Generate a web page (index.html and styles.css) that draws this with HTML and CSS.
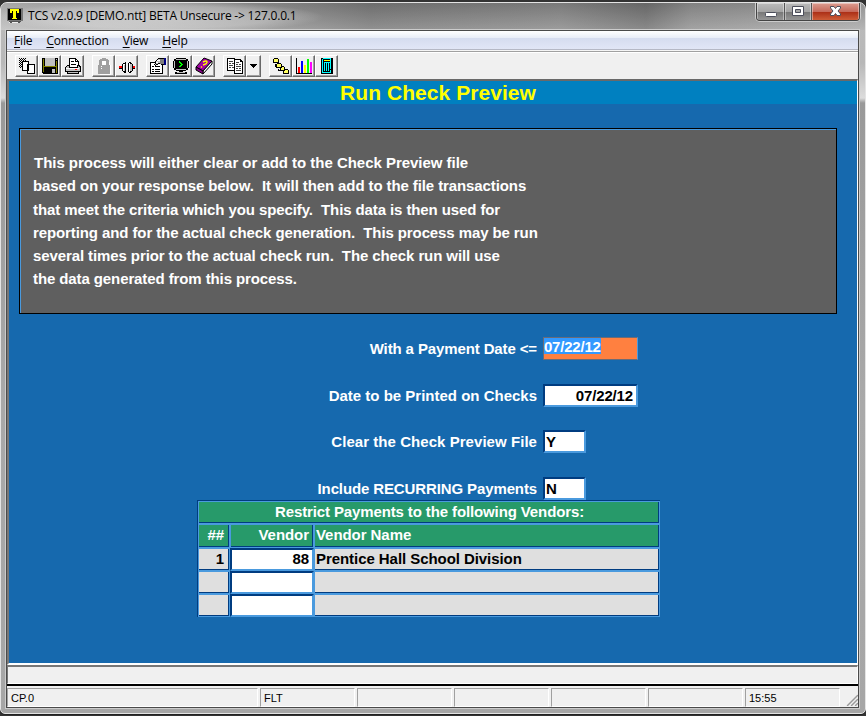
FILE: index.html
```html
<!DOCTYPE html>
<html lang="en">
<head>
<meta charset="utf-8">
<title>TCS v2.0.9</title>
<link rel="stylesheet" href="styles.css">
</head>
<body>
<div class="window">
  <header class="titlebar">
    <svg class="app-icon" width="16" height="16" viewBox="0 0 16 16" shape-rendering="crispEdges"><path fill="#777" d="M0 0h16v13H0z"/><path fill="#000" d="M1 1h13v11H1z"/><path fill="#ff0" d="M3 1h9v4h-2V3H9v7h1v1H5v-1h1V3H5v2H3z"/><path fill="#555" d="M2 13h12v1H2zM3 14h2v1H3zM11 14h2v1h-2z"/><path fill="#eee" d="M2 14h1v1H2zM5 14h6v1H5z"/></svg>
    <span class="caption">TCS v2.0.9 [DEMO.ntt] BETA Unsecure -&gt; 127.0.0.1</span>
    <div class="controls">
      <span class="ctl min"><svg width="26" height="18" viewBox="0 0 26 18"><rect x="8.500" y="9.500" width="11" height="4" rx="1" fill="#fff" stroke="#4c4e5b"/></svg></span>
      <span class="ctl max"><svg width="26" height="18" viewBox="0 0 26 18"><path fill="#fff" stroke="#4c4e5b" fill-rule="evenodd" d="M7.500 3.500h11v9h-11zM10.500 6.500v3h5v-3z"/></svg></span>
      <span class="ctl close"><svg width="46" height="18" viewBox="0 0 46 18"><path fill="#fff" stroke="#4c4e5b" d="M18.500 3.500h3.500l1.500 2 1.500-2h3.500v1.500L26 8l2.500 3v1.500H25l-1.500-2-1.500 2h-3.500V11L21 8l-2.500-3z"/></svg></span>
    </div>
  </header>
  <main class="client">
    <nav class="menu"><span><u>F</u>ile</span><span><u>C</u>onnection</span><span><u>V</u>iew</span><span><u>H</u>elp</span></nav>
    <div class="toolbar">
      <div class="group">
        <span class="tool"><svg width="18" height="18" viewBox="0 0 18 18" shape-rendering="crispEdges"><defs><pattern id="dots" width="2" height="2" patternUnits="userSpaceOnUse"><path d="M0 0h1v1H0zM1 1h1v1H1z"/></pattern></defs><path fill="url(#dots)" d="M1 1h7v3H4v7H1z"/><path fill="#fff" stroke="#000" d="M4.500 4.500h6v9h-6zM9.500 7.500h7v9h-7z"/></svg></span>
        <span class="tool"><svg width="18" height="18" viewBox="0 0 18 18" shape-rendering="crispEdges"><path d="M1 1h16v16H2v-1H1z"/><path fill="#808000" d="M2 2h1v13H2zM15 4h1v12h-1zM3 9h12v1H3z"/><path fill="#c0c0c0" d="M4 1h10v8H4zM15 2h1v1h-1zM11 12h3v4h-3z"/></svg></span>
        <span class="tool"><svg width="18" height="18" viewBox="0 0 18 18" shape-rendering="crispEdges"><path fill="#fff" stroke="#000" d="M5.500 1.500h6l3 3v6h-9z"/><path d="M11 1v4h4V4h-3V1zM7 4h3v1H7zM7 7h5v1H7z"/><path fill="#c0c0c0" stroke="#000" d="M3.500 8.500h2v2h8v-2h2l1 2v4h-15v-4zM3.500 14.500h11v2h-11z"/><path fill="#fff" d="M2 11h13v1H2z"/><path fill="#f00" d="M11 12h2v1h-2z"/></svg></span>
      </div>
      <div class="group">
        <span class="tool"><svg width="18" height="18" viewBox="0 0 18 18" shape-rendering="crispEdges"><path fill="#fff" d="M5 4h2V3h7v2h1v3h1v10H5v-1h10V9H5z"/><path fill="#a0a0a0" fill-rule="evenodd" d="M4 3h1V2h2V1h4v1h2v1h1v5h1v9H3V8h1zM7 4v4h4V4z"/><path fill="#fff" d="M6 9h1v1H6zM6 11h1v1H6z"/></svg></span>
        <span class="tool"><svg width="18" height="18" viewBox="0 0 18 18" shape-rendering="crispEdges"><path d="M1 9h3v3H1zM14 9h3v3h-3z"/><path fill="#f00" d="M1 9h3v2H1zM14 9h3v2h-3z"/><path d="M4 7h1V6h2V5h1v11H6v-1H5v-1H4zM10 6h1V5h2v1h1v1h1v7h-1v1h-1v1h-2v-1h-1z"/><path fill="#fff" d="M5 7h2v7H5zM11 6h1v9h-1z"/><path fill="#c0c0c0" d="M12 7h2v7h-2zM6 8h1v6H6z"/></svg></span>
      </div>
      <div class="group">
        <span class="tool"><svg width="18" height="18" viewBox="0 0 18 18" shape-rendering="crispEdges"><path fill="#fff" stroke="#000" d="M1.500 5.500h12v11h-12z"/><path d="M3 9h2v1H3zM6 9h5v1H6zM3 12h2v1H3zM6 12h5v1H6zM3 14h2v1H3zM6 14h5v1H6z"/><path fill="#c0c0c0" stroke="#000" d="M5.500 5.500l4-4h5v6l-5-1-3 2-1-1 2-2z"/><path fill="#808080" d="M11 2h4v5h-4z"/><path fill="#000080" d="M15 1h2v7h-2z"/><path fill="#fff" d="M8 3h3v1H8zM7 5h2v1H7z"/></svg></span>
        <span class="tool"><svg width="18" height="18" viewBox="0 0 18 18" shape-rendering="crispEdges"><path d="M4 1h10v1h2v2h1v7h-1v2h-2v1h-3v1h4v2H3v-2h4v-1H4v-1H2v-2H1V4h1V2h2z"/><path fill="#c0c0c0" d="M4 2h10v1H4zM2 4h1v7H2zM4 12h10v1H4zM15 4h1v7h-1zM5 15h8v1H5z"/><path fill="#0f0" d="M7 4h1v1h1v1h1v1h1v1h-1v1H9v1H7V9h1V8h1V7H8V6H7z"/></svg></span>
        <span class="tool"><svg width="18" height="18" viewBox="0 0 18 18"><path fill="#a000a0" stroke="#000" d="M1 10L9 1l8 3-9 10z"/><path fill="#fff" stroke="#000" d="M8 14l9-10v3L8 17z"/><path fill="#808" stroke="#000" d="M1 10l7 4v3l-7-4z"/><path fill="none" stroke="#ff0" stroke-width="1.400" d="M8 5q4-2 4 0T8 8M7 9.500l-1 1"/></svg></span>
      </div>
      <div class="group">
        <span class="tool"><svg width="18" height="18" viewBox="0 0 18 18" shape-rendering="crispEdges"><path fill="#fff" stroke="#000" d="M1.500 1.500h7v12h-7zM8.500 2.500h6l2 2v12h-8z"/><path d="M14 2v3h3V4h-2V2z"/><path fill="#444" d="M3 4h4v1H3zM3 6h2v1H3zM6 6h2v1H6zM3 8h4v1H3zM3 10h2v1H3zM6 10h2v1H6zM10 5h3v1h-3zM10 7h2v1h-2zM13 7h2v1h-2zM10 9h5v1h-5zM10 11h2v1h-2zM13 11h2v1h-2zM10 13h5v1h-5z"/></svg></span>
        <span class="tool narrow"><svg width="7" height="4" viewBox="0 0 7 4" shape-rendering="crispEdges"><path d="M0 0h7v1H6v1H5v1H4v1H3V3H2V2H1V1H0z"/></svg></span>
      </div>
      <div class="group">
        <span class="tool"><svg width="18" height="18" viewBox="0 0 18 18" shape-rendering="crispEdges"><path fill="#ffff60" stroke="#000" d="M1.500 2.500l1-1h3l1 1v3h-5zM4.500 7.500l1-1h3l1 1v3h-5zM8.500 10.500l1-1h2l1 1v3h-4zM11.500 13.500l1-1h3l1 1v3h-5z"/><path d="M3 7h1v2h1v1H3zM6 12h1v1h2v1H6z"/></svg></span>
        <span class="tool"><svg width="18" height="18" viewBox="0 0 18 18" shape-rendering="crispEdges"><path d="M1 1h1v15h15v1H1z"/><path fill="#f00" d="M3 10h2v6H3z"/><path fill="#00f" d="M6 4h2v12H6z"/><path fill="#ff0" d="M9 8h2v8H9z"/><path fill="#0f0" d="M12 2h2v14h-2z"/><path fill="#f0f" d="M15 5h2v11h-2z"/></svg></span>
        <span class="tool"><svg width="18" height="18" viewBox="0 0 18 18" shape-rendering="crispEdges"><path d="M3 1h12v16H3z"/><path fill="#0ff" d="M4 2h1v14H4zM5 1h8v1H5zM5 15h8v1H5zM12 2h1v10h-1zM6 5h6v1H6zM6 6h1v8H6zM8 6h1v8H8zM10 6h1v8h-1zM12 13h1v2h-1z"/><path fill="#ff0" d="M6 3h6v1H6z"/></svg></span>
      </div>
    </div>
    <section class="screen">
      <h1>Run Check Preview</h1>
      <div class="notice">This process will either clear or add to the Check Preview file
based on your response below.  It will then add to the file transactions
that meet the criteria which you specify.  This data is then used for
reporting and for the actual check generation.  This process may be run
several times prior to the actual check run.  The check run will use
the data generated from this process.</div>
      <div class="form">
        <label class="tight">With a Payment Date &lt;=</label><div class="field active"><span>07/22/12</span></div>
        <label>Date to be Printed on Checks</label><div class="field date">07/22/12</div>
        <label class="loose">Clear the Check Preview File</label><div class="field flag">Y</div>
        <label class="tight">Include RECURRING Payments</label><div class="field flag">N</div>
      </div>
      <div class="vendors">
        <div class="cell head title">Restrict Payments to the following Vendors:</div>
        <div class="cell head num">##</div><div class="cell head num ven">Vendor</div><div class="cell head">Vendor Name</div>
        <div class="cell num">1</div><div class="cell num edit">88</div><div class="cell name">Prentice Hall School Division</div>
        <div class="cell"></div><div class="cell edit"></div><div class="cell"></div>
        <div class="cell"></div><div class="cell edit"></div><div class="cell"></div>
      </div>
    </section>
    <div class="message"></div>
    <footer class="status">
      <span class="wide">CP.0</span><span>FLT</span><span></span><span></span><span></span><span></span><span>15:55</span>
      <svg class="grip" width="12" height="12" viewBox="0 0 12 12"><path stroke="#fff" d="M0 12L12 0M4 12l8-8M8 12l4-4"/><path stroke="#999" stroke-width="1.500" d="M1 12L12 1M5 12l7-7M9 12l3-3"/></svg>
    </footer>
  </main>
</div>
</body>
</html>
```
FILE: styles.css
```css
* { box-sizing: border-box; }
body { margin: 0; width: 866px; height: 716px; overflow: hidden; background: #333; padding-top: 2px; font-family: "Liberation Sans", Arial, sans-serif; }
svg { display: block; flex: none; }
.window { width: 866px; height: 712px; border: 1px solid #e4e4e4; border-radius: 7px 7px 5px 5px; background: linear-gradient(#bbb 0, #b8b8b8 60px, #dcdcdc 95px, #999 100px, #a9a9a9 400px, #a6a6a6); padding: 0 6px 5px 5px; box-shadow: 0 1px #222; overflow: hidden; }
.titlebar { height: 27px; margin: 0 -6px 0 -5px; padding: 0 5px 0 6px; display: flex; background: radial-gradient(ellipse 165px 16px at 158px 14px, rgba(255,255,255,.4), rgba(255,255,255,.25) 70%, transparent), linear-gradient(rgba(0,0,0,.12), rgba(255,255,255,.16)), linear-gradient(90deg, #bdbdbd, #a6a6a6 170px, #8b8b8b 310px, #7c7c7c 370px, #8a8a8a 560px, #747474 645px, #929292 690px, #a8a8a8); }
.app-icon { margin: 5px 0 0; }
.caption { margin-left: 5px; font: 12px/25px "Open Sans", sans-serif; letter-spacing: -.2px; white-space: nowrap; color: #000; }
.controls { margin-left: auto; height: 18px; margin-right: 0; display: flex; border: 1px solid #444; border-top: 0; border-radius: 0 0 4px 4px; box-shadow: 0 0 0 1px #ccc; overflow: hidden; }
.ctl { height: 18px; background: linear-gradient(#bbb, #a4a4a4 48%, #777 50%, #999); box-shadow: inset 0 0 0 1px rgba(255,255,255,.4); border-right: 1px solid #555; }
.min { width: 28px; } .max { width: 27px; }
.close { width: 47px; border-right: 0; background: linear-gradient(#dc9d91, #c6695a 48%, #ab2e16 50%, #d2633c); }
.client { width: 853px; height: 678px; border: 1px solid #4a4a4a; background: #f0f0f0; box-shadow: 0 0 0 1px #ccc; }
.menu { height: 19px; display: flex; padding-left: 7px; font: 12px/20px "Open Sans", sans-serif; letter-spacing: -.16px; gap: 14px; background: linear-gradient(#fff, #e8edf7 7px, #d5dcef 7px, #e1e6f6); border-bottom: 1px solid #b5b8c5; }
.menu u { text-underline-offset: 2px; }
.toolbar { height: 30px; border-top: 1px solid #f5f5f5; box-shadow: inset 0 1px #a0a0a0, inset 0 2px #fff; padding: 4px 0 0 8px; display: flex; gap: 8px; }
.group { display: flex; }
.tool { width: 23px; height: 22px; border: 1px solid #fff; border-right: 1px solid #696969; border-bottom: 1px solid #696969; box-shadow: inset -1px -1px #a0a0a0; padding: 1px 0 0 2px; overflow: hidden; }
.narrow { width: 15px; padding: 8px 0 0 3px; }
.screen { height: 586px; margin-top: -1px; border-top: 2px solid #696969; border-left: 2px solid #777; border-right: 1px solid #fff; border-bottom: 2px solid #fff; background: #1669ae; display: flex; flex-direction: column; }
h1 { margin: 0; height: 23px; flex: none; background: #0080c0; color: #ff0; font-size: 21px; line-height: 24px; text-align: center; padding-left: 10px; letter-spacing: .06px; }
.notice { margin: 24px 0 0 10px; width: 818px; height: 186px; flex: none; border: 1px solid #000; box-shadow: inset 1px 1px #4a9ade; background: #5f5f5f; color: #fff; font-weight: bold; font-size: 15px; line-height: 23.250px; letter-spacing: -.1px; white-space: pre; padding: 22px 13px; }
.notice::first-line { letter-spacing: -.03px; }
.notice { text-indent: 1px; }
.form { margin-top: 23px; height: 163px; flex: none; display: grid; grid-template-columns: 528px auto; grid-template-rows: 47px 46px 47px 23px; column-gap: 6px; justify-content: start; color: #fff; font-size: 15px; font-weight: bold; }
.form label { text-align: right; line-height: 23px; }
.form .tight { letter-spacing: -.12px; }
.form .loose { letter-spacing: .05px; }
.field { height: 23px; color: #000; line-height: 19px; border: 2px solid; border-color: #003c80 #4a9ade #4a9ade #003c80; background: #fff; padding: 0 3px 0 1px; }
.active { width: 95px; background: #ff8040; border-width: 1px; border-color: #6b6b76 #4a9ade #6b6b76 #6b6b76; padding: 0; line-height: 17px; }
.active span { display: inline-block; background: #3399ff; color: #fff; height: 16px; line-height: 17px; letter-spacing: -.22px; }
.date { width: 95px; text-align: right; letter-spacing: -.15px; } .flag { width: 43px; }
.vendors { margin-left: 188px; width: 463px; height: 117px; flex: none; display: grid; grid-template-columns: 32px 84px 346px; grid-template-rows: 23px 24px 23px 23px 23px; border: solid #003c80; border-width: 1px 0 0 1px; color: #000; font-size: 15px; font-weight: bold; }
.cell { border: 1px solid #4a9ade; box-shadow: inset -1px -1px #003c80; background: #dfdfdf; line-height: 20px; padding-left: 1px; white-space: pre; letter-spacing: -.06px; }
.head { background: #279a6a; color: #fff; } .title { grid-column: 1 / 4; text-align: center; letter-spacing: -.12px; }
.num { text-align: right; padding-right: 5px; } .ven { padding-right: 4px; }
.edit { background: #fff; border: 2px solid; border-color: #003c80 #4a9ade #4a9ade #003c80; box-shadow: none; line-height: 18px; padding-right: 3px; }
.message { height: 19px; border: 1px solid #fff; border-top: 2px solid #777; border-left: 1px solid #777; }
.status { height: 24px; border-top: 2px solid #000; padding: 2px 0 0; display: flex; gap: 2px; font-size: 11px; }
.status span { width: 95px; height: 19px; border: 1px solid #a0a0a0; border-right-color: #fff; border-bottom-color: #fff; padding-left: 3px; line-height: 18px; flex: none; }
.status .wide { width: 251px; }
.grip { margin: 6px 0 0 auto; }
```
